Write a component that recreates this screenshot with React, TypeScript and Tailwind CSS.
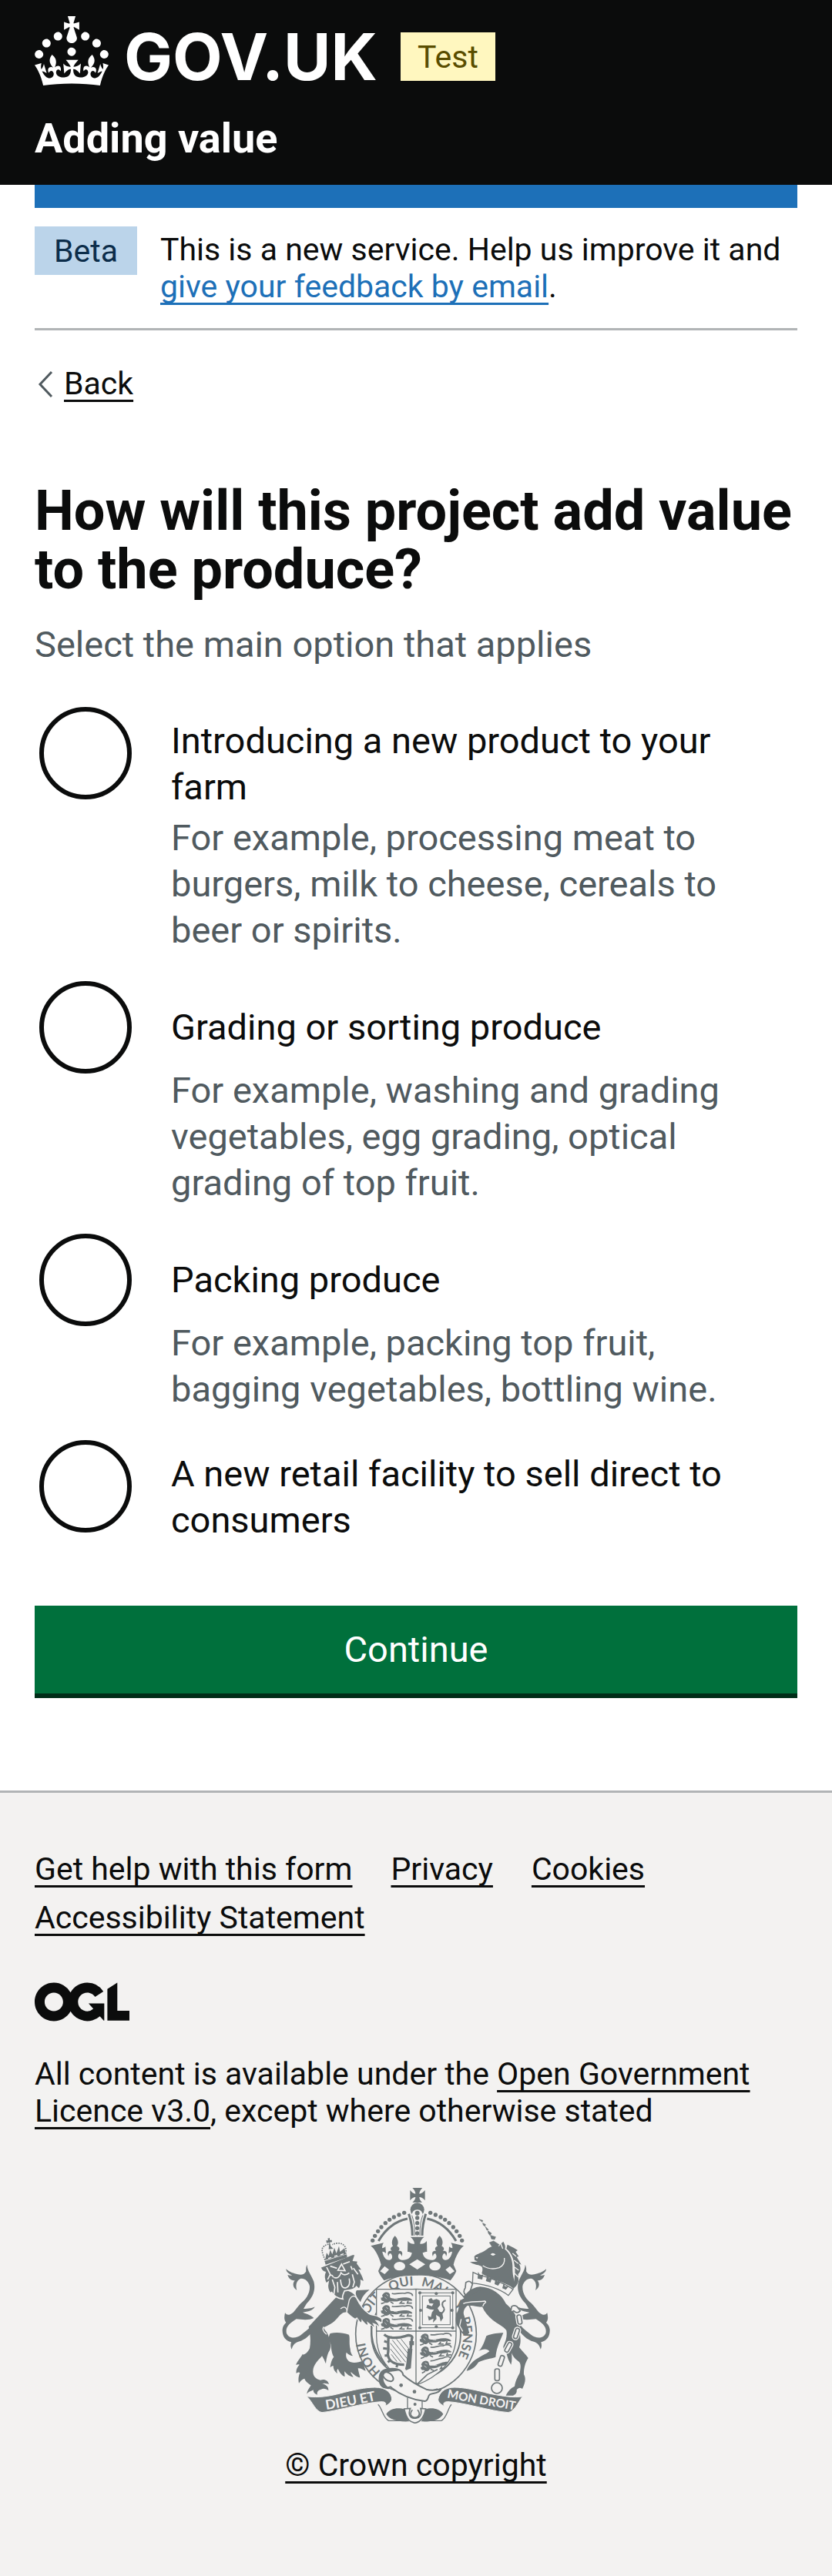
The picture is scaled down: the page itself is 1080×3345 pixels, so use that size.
import React, { useState } from 'react';

const options = [
  {
    id: 'new-product',
    label: 'Introducing a new product to your farm',
    hint: 'For example, processing meat to burgers, milk to cheese, cereals to beer or spirits.',
  },
  {
    id: 'grading',
    label: 'Grading or sorting produce',
    hint: 'For example, washing and grading vegetables, egg grading, optical grading of top fruit.',
  },
  {
    id: 'packing',
    label: 'Packing produce',
    hint: 'For example, packing top fruit, bagging vegetables, bottling wine.',
  },
  { id: 'retail', label: 'A new retail facility to sell direct to consumers', hint: '' },
];

const footerLinks = ['Get help with this form', 'Privacy', 'Cookies', 'Accessibility Statement'];

const linkClass = 'underline decoration-[3px] underline-offset-[7px] [text-decoration-skip-ink:none]';

function Crown() {
  return (
    <svg viewBox="0 0 32 30" className="h-[90px] w-24 shrink-0" fill="currentColor" aria-hidden="true">
      <path d="M22.6 10.4c-1 .4-2-.1-2.4-1-.4-.9.1-2 1-2.4.9-.4 2 .1 2.4 1s-.1 2-1 2.4m-5.9 6.7c-.9.4-2-.1-2.4-1-.4-.9.1-2 1-2.4.9-.4 2 .1 2.4 1s-.1 2-1 2.4m10.8-3.7c-1 .4-2-.1-2.4-1-.4-.9.1-2 1-2.4.9-.4 2 .1 2.4 1s0 2-1 2.4m3.3 4.8c-1 .4-2-.1-2.4-1-.4-.9.1-2 1-2.4.9-.4 2 .1 2.4 1s-.1 2-1 2.4M17 4.7l2.3 1.2V2.5l-2.3.7-.2-.2.9-3h-3.4l.9 3-.2.2c-.1.1-2.3-.7-2.3-.7v3.4L15 4.7c.1.1.1.2.2.2l-1.3 4c-.1.2-.1.4-.1.6 0 1.1.8 2 1.9 2.2h.7c1-.2 1.9-1.1 1.9-2.1 0-.2 0-.4-.1-.6l-1.3-4c-.1-.2 0-.2.1-.3m-7.6 5.7c.9.4 2-.1 2.4-1 .4-.9-.1-2-1-2.4-.9-.4-2 .1-2.4 1s0 2 1 2.4m-5 3c.9.4 2-.1 2.4-1 .4-.9-.1-2-1-2.4-.9-.4-2 .1-2.4 1s.1 2 1 2.4m-3.2 4.8c.9.4 2-.1 2.4-1 .4-.9-.1-2-1-2.4-.9-.4-2 .1-2.4 1s0 2 1 2.4m14.8 11c4.4 0 8.6.3 12.3.8 1.1-4.5 2.4-7 3.7-8.8l-2.5-.9c.2 1.3.3 1.9 0 2.7-.4-.4-.8-1.1-1.1-2.3l-1.2 4c.7-.5 1.3-.8 2-.9-1.1 2.5-2.6 3.1-3.5 3-1.1-.2-1.7-1.2-1.5-2.1.3-1.2 1.5-1.5 2.1-.1 1.1-2.3-.8-3-2-2.3 1.9-1.9 2.1-3.5.6-5.6-2.1 1.6-2.1 3.2-1.2 5.5-1.2-1.4-3.2-.6-2.5 1.6.9-1.4 2.1-.5 1.9.8-.2 1.1-1.7 2.1-3.5 1.9-2.7-.2-2.9-2.1-2.9-3.6.7-.1 1.9.5 2.9 1.9l.4-4.3c-1.1 1.1-2.1 1.4-3.2 1.4.4-1.2 2.1-3 2.1-3h-5.4s1.7 1.9 2.1 3c-1.1 0-2.1-.2-3.2-1.4l.4 4.3c1-1.4 2.2-2 2.9-1.9-.1 1.5-.2 3.4-2.9 3.6-1.9.2-3.4-.8-3.5-1.9-.2-1.3 1-2.2 1.9-.8.7-2.3-1.2-3-2.5-1.6.9-2.2.9-3.9-1.2-5.5-1.5 2-1.3 3.7.6 5.6-1.2-.7-3.1 0-2 2.3.6-1.4 1.8-1.1 2.1.1.2.9-.3 1.9-1.5 2.1-.9.2-2.4-.5-3.5-3 .6 0 1.2.3 2 .9l-1.2-4c-.3 1.1-.7 1.9-1.1 2.3-.3-.8-.2-1.4 0-2.7l-2.9.9C1.3 23 2.6 25.5 3.7 30c3.7-.5 7.9-.8 12.3-.8" />
    </svg>
  );
}

function LicenceLogo() {
  return (
    <svg viewBox="0 0 483.2 195.7" className="h-[51px] w-[123px]" fill="currentColor" role="img" aria-label="Open Government Licence">
      <path d="M421.5 142.8V.1l-50.7 32.3v161.1h112.4v-50.7zm-122.3-9.6A47.12 47.12 0 0 1 221 97.8c0-26 21.1-47.1 47.1-47.1 16.7 0 31.4 8.7 39.7 21.8l42.7-27.2A97.63 97.63 0 0 0 268.1 0c-36.5 0-68.3 20.1-85.1 49.7A98 98 0 0 0 97.8 0C43.9 0 0 43.9 0 97.8s43.9 97.8 97.8 97.8c36.5 0 68.3-20.1 85.1-49.7a97.76 97.76 0 0 0 149.6 25.4l19.4 22.2h3v-87.8h-80l24.3 27.5zM97.8 145c-26 0-47.1-21.1-47.1-47.1s21.1-47.1 47.1-47.1 47.1 21.1 47.1 47.1S123.8 145 97.8 145" />
    </svg>
  );
}

const INK = '#6f7779';
const PAPER = '#f3f2f1';

const beads: [number, number][] = [
  [560, 160], [540, 168], [520, 177], [503, 187], [487, 200], [471, 216], [458, 232], [446, 250], [437, 268],
];

function CrownHalf() {
  return (
    <g>
      {beads.map(([x, y]) => (
        <circle key={x} cx={x} cy={y} r="8" />
      ))}
      <path d="M460 270C490 218 530 192 573 183" fill="none" stroke={INK} strokeWidth="9" />
      <path d="M578 164C588 195 592 220 592 249" fill="none" stroke={INK} strokeWidth="9" />
      <path d="M590 170C599 195 601 220 601 249" fill="none" stroke={INK} strokeWidth="3" />
      <path d="M430 289L480 277C476 282 474 290 474 298C480 297 484 295 487 291L489 318C484 313 480 311 475 311C478 330 488 345 503 344C515 342 517 328 507 318C500 318 499 328 499 330C492 318 497 305 512 309C502 300 510 292 516 290C508 275 514 260 524 250C534 260 541 275 532 290C540 292 546 300 537 309C552 305 556 318 550 330C549 322 545 318 540 319C533 330 536 342 550 344C572 346 588 335 590 316C582 313 578 312 573 312L574 270C580 278 588 282 600 281C600 270 592 260 584 254H612V404C565 404 520 408 482 424C470 410 462 395 459 387L470 362C462 330 445 300 430 289Z" />
      <ellipse cx="542" cy="368" rx="22" ry="17" fill={PAPER} />
      <path d="M484 368L501 382L484 399L466 388Z" fill={PAPER} />
    </g>
  );
}

function Tail() {
  return (
    <path d="M158 512C176 500 194 474 192 446C188 426 168 412 154 418C138 428 137 445 142 462C126 452 124 436 134 424C118 424 110 415 106 402C112 405 120 404 124 404C108 398 100 388 100 379C114 392 130 396 146 400C160 404 172 400 178 388C176 375 180 365 182 362C181 384 200 405 208 428C216 460 205 488 180 514L168 534C190 534 202 532 212 526C206 540 185 546 165 548C185 556 200 560 208 570C190 580 160 576 140 574C115 590 96 605 102 630C112 652 140 650 158 636C172 624 190 612 198 600L214 606C198 632 176 656 148 662C130 668 125 680 122 692C116 682 118 672 120 664C98 660 84 640 86 614C88 600 94 594 100 588C90 575 94 562 96 550C105 562 115 558 128 548C138 536 148 522 158 512Z" />
  );
}

function ShieldLion() {
  return (
    <g>
      <path d="M12 4C22 -4 34 0 36 8C38 14 34 18 40 22C60 28 80 18 96 20C108 20 122 24 124 32C118 34 110 30 104 32C96 36 80 30 70 34C56 38 44 32 34 36C26 44 14 42 12 34C4 34 0 28 2 20C8 22 10 18 6 12C8 8 10 6 12 4Z" />
      <path d="M44 4C58 10 76 0 94 4C110 -2 126 4 124 14M16 40L2 44M38 36L50 44M84 34L76 42L94 43M108 32L104 42L122 42" fill="none" stroke={INK} strokeWidth="5" />
      <path d="M22 8L30 14M16 18L24 26M52 24L66 26" stroke={PAPER} strokeWidth="2" />
    </g>
  );
}

function RoyalArms() {
  return (
    <svg viewBox="84 63 1044 918" className="h-[306px] w-[348px]" fill={INK} role="img" aria-label="Royal coat of arms">
      <defs>
        <path id="garter-arc" d="M480.500 787.500A192 192 0 1 1 650 820" />
        <path id="motto-left" d="M257 927Q365 910 475 885" />
        <path id="motto-right" d="M726 880Q850 905 1000 930" />
        <clipPath id="shield-clip">
          <path d="M452 458H762V640C762 740 690 800 606 832C522 800 452 740 452 640Z" />
        </clipPath>
      </defs>

      {/* tails of both supporters */}
      <Tail />
      <g transform="translate(1213 0) scale(-1 1)">
        <Tail />
      </g>

      {/* lion body and legs */}
      <path d="M296 488C260 525 220 570 188 604C196 640 196 665 192 688C182 712 160 718 166 708C160 720 146 735 138 752C144 752 148 750 152 752C142 762 138 775 140 785C147 782 150 780 154 784C148 796 147 812 150 824C160 810 166 808 172 806C176 820 190 826 197 832C192 842 182 852 181 866C188 856 200 854 206 850C206 862 214 866 222 869C218 858 226 850 236 848C248 842 258 848 265 852C266 838 254 828 240 826C250 822 260 826 267 828C264 812 248 806 234 812C214 808 204 795 205 776C206 752 225 735 240 718C246 726 250 736 255 748C258 722 262 708 270 695C278 680 270 650 262 632C256 620 246 614 247 606C262 600 284 590 300 570C312 556 322 545 336 548C352 562 358 568 370 572C376 566 384 580 392 588C402 580 408 590 418 598C426 590 436 600 444 606C452 596 456 594 466 606L470 590C478 582 474 570 462 566C450 556 434 566 424 556C404 540 388 520 372 490C366 474 352 466 330 462Z" />
      <path d="M272 630C298 624 322 628 345 635C350 650 344 664 350 690C350 704 356 712 360 718C350 716 342 712 335 704C330 722 338 736 352 742C370 748 385 740 398 738L410 776C400 772 390 764 380 766C382 780 386 790 388 802C374 800 362 788 352 780C352 788 358 792 362 800C346 798 336 788 328 778C326 786 330 792 328 798C314 792 308 780 302 768C296 774 298 780 300 786C288 778 284 768 284 756C278 756 276 760 272 762C274 746 278 730 286 722C278 710 276 690 274 672C268 660 262 645 272 630Z" />
      <path d="M246 604Q238 618 258 634M312 534Q330 520 336 536L340 560" fill="none" stroke={PAPER} strokeWidth="4" />
      <path d="M375 462L425 460C405 475 395 490 390 508C375 490 366 474 375 462Z" />

      {/* lion head, mane and small crown */}
      <path d="M234 372L256 364L360 322L370 322L362 346L380 348L378 358L398 385L386 384C394 400 404 412 404 430L392 424C394 440 388 452 384 458L374 448C368 460 345 462 328 464C320 480 318 490 321 496C300 494 284 482 278 470L272 474C262 462 260 446 264 430L256 436C248 420 246 405 252 392C242 390 236 382 234 372Z" stroke={PAPER} strokeWidth="5" />
      <path d="M258 372L272 400L262 420M272 368L298 376M322 360L348 350M302 384L316 360L330 386ZM286 412C300 418 310 408 314 394C322 404 334 404 346 394M312 420C314 445 320 456 334 452C346 448 350 436 346 416M280 420L290 450L286 480M300 430L302 470M358 400L366 430L360 450M362 376L380 400M272 404Q280 400 284 412M352 368L358 382" fill="none" stroke={PAPER} strokeWidth="5" />
      <path d="M250 348L336 322L338 334L254 362Z" />
      <path d="M252 344C240 315 236 302 246 292C255 283 264 282 270 284M332 320C336 304 332 290 322 284C312 276 292 278 280 284" fill="none" stroke={INK} strokeWidth="5" strokeDasharray="5 4" />
      <path d="M252 344L258 316L266 328L272 304L280 322L288 296L296 318L306 290L310 312L328 298L332 322ZM262 260L270 258L270 266L278 266L279 274L270 275L274 290L284 300L266 302L268 276L258 278L256 268L264 268Z" />
      <path d="M264 338L276 334M288 330L300 327M312 324L324 320" stroke={PAPER} strokeWidth="4" />

      {/* unicorn body and legs */}
      <path d="M880 640C905 630 928 628 946 628C936 655 920 680 916 722C900 728 868 732 850 742C842 752 832 770 803 776C808 762 815 752 830 738C850 722 880 710 892 700C884 688 865 690 848 700C864 688 872 664 880 640Z" />
      <path d="M776 512C790 480 815 452 856 448C900 450 940 478 956 514C980 535 1000 560 1008 600C1010 640 1018 660 1008 684C1020 700 1034 712 1043 726C1030 745 1025 770 1026 790C1036 806 1030 826 1020 846C1012 840 1004 842 998 850C1000 862 992 870 984 872H956C962 858 975 842 990 836C994 812 1002 800 1010 784C1014 762 1016 745 1004 738C988 728 982 715 978 706C980 722 980 738 976 752C968 740 962 724 958 706C950 700 946 690 946 680C956 660 962 640 958 618C945 600 925 594 905 578C885 562 872 545 864 526C845 528 820 518 805 522C790 535 786 548 792 560C798 580 812 600 816 632C800 642 784 628 772 606C758 590 760 560 768 545C774 532 772 524 776 512Z" />

      {/* unicorn head, horn, collar and mane */}
      <path d="M833 330C845 318 862 318 880 304C895 290 915 286 930 290C938 278 942 276 946 272C952 284 956 292 952 302C972 316 984 345 982 380C982 410 992 430 994 446L986 456C960 430 900 424 862 396C865 385 868 376 860 368C845 362 830 362 816 352L846 350L834 344Z" />
      <path d="M958 300L962 284L974 290L986 296L1002 306L994 312L1006 330L998 332L1016 362L1006 358C1018 375 1012 395 1004 398L1004 412C1008 430 1000 440 994 448C982 425 996 400 990 370C988 340 976 315 958 300Z" />
      <path d="M896 322Q904 312 916 322Q906 332 896 322ZM838 334L848 332L844 340Z" fill={PAPER} />
      <path d="M866 366Q895 385 930 374Q954 362 950 336M936 280L944 300M982 318L996 330M988 345L1004 358M990 372L1006 384M990 396L1004 410" fill="none" stroke={PAPER} strokeWidth="4" />
      <path d="M852 186L866 190L864 196ZM866 200L877 206L874 212L868 208ZM876 214L888 226L882 228ZM886 230L900 240L894 248L888 240ZM896 248L916 254L912 264L900 262ZM892 276L908 270L930 284L916 298L902 292Z" stroke={INK} strokeWidth="2" />
      <path d="M828 392L846 400C880 410 930 422 984 458L966 482C930 455 880 440 826 434Z" fill={PAPER} stroke={INK} strokeWidth="4" />
      <path d="M848 390L856 404L868 400L864 420L846 416ZM884 402L890 416L902 414L896 432L878 426ZM916 414L922 428L936 428L926 444L912 438ZM948 432L952 446L966 448L956 460L942 454Z" />

      {/* chain */}
      <g fill="none" stroke={PAPER} strokeWidth="13">
        <rect x="1001" y="558" width="16" height="36" rx="7" transform="rotate(-10 1009 576)" />
        <rect x="990" y="610" width="15" height="40" rx="7" transform="rotate(18 997 630)" />
        <rect x="958" y="664" width="15" height="40" rx="7" transform="rotate(28 965 684)" />
      </g>
      <g fill={PAPER} stroke={INK} strokeWidth="5">
        <path d="M975 548L978 526Q985 518 998 524L1012 542Q1000 556 986 542Z" />
        <rect x="1001" y="558" width="16" height="36" rx="7" transform="rotate(-10 1009 576)" />
        <rect x="990" y="610" width="15" height="40" rx="7" transform="rotate(18 997 630)" />
        <rect x="958" y="664" width="15" height="40" rx="7" transform="rotate(28 965 684)" />
        <rect x="930" y="716" width="16" height="42" rx="7" transform="rotate(18 938 737)" />
        <rect x="913" y="768" width="18" height="46" rx="7" />
        <circle cx="921" cy="843" r="21" />
      </g>

      {/* garter */}
      <circle cx="606" cy="632" r="235" fill={PAPER} stroke={INK} strokeWidth="5" />
      <circle cx="606" cy="632" r="174" fill="none" stroke={INK} strokeWidth="6" />
      <g fontFamily="Lato, sans-serif" fontWeight="700" fontSize="50">
        <text><textPath href="#garter-arc" startOffset="14">HONI</textPath></text>
        <text><textPath href="#garter-arc" startOffset="226">SOIT</textPath></text>
        <text><textPath href="#garter-arc" startOffset="383">QUI</textPath></text>
        <text><textPath href="#garter-arc" startOffset="505">MAL</textPath></text>
        <text><textPath href="#garter-arc" startOffset="652">Y</textPath></text>
        <text><textPath href="#garter-arc" startOffset="712">PENSE</textPath></text>
      </g>

      {/* shield */}
      <path d="M452 458H762V640C762 740 690 800 606 832C522 800 452 740 452 640Z" fill={PAPER} stroke={INK} strokeWidth="4" />
      <g clipPath="url(#shield-clip)">
        <path d="M606 458V832M452 621H762" stroke={INK} strokeWidth="4" />
        <g transform="translate(468 470)"><ShieldLion /></g>
        <g transform="translate(468 520)"><ShieldLion /></g>
        <g transform="translate(468 570)"><ShieldLion /></g>
        <g transform="translate(618 632) rotate(-2)"><ShieldLion /></g>
        <g transform="translate(618 684) rotate(-6)"><ShieldLion /></g>
        <g transform="translate(618 742) rotate(-12)"><ShieldLion /></g>
        <g fill="none" stroke={INK} strokeWidth="3">
          <rect x="621" y="472" width="128" height="136" />
          <rect x="631" y="484" width="108" height="112" />
        </g>
        <circle cx="621" cy="472" r="6" />
        <circle cx="749" cy="472" r="6" />
        <circle cx="621" cy="608" r="6" />
        <circle cx="749" cy="608" r="6" />
        <circle cx="685" cy="475" r="6" />
        <circle cx="685" cy="604" r="6" />
        <circle cx="624" cy="540" r="6" />
        <circle cx="746" cy="540" r="6" />
        <path d="M654 498L666 492L672 500L686 496L698 502L700 520L690 532L698 545L708 548L712 570L702 584L698 566L684 558L686 574L672 588L674 572L656 580L652 562L664 566L668 548L676 538L660 536L646 530L650 518L668 524L674 514L658 512Z" />
        <path d="M722 502Q704 506 710 524Q724 536 706 552" fill="none" stroke={INK} strokeWidth="6" />
        <path d="M482 634C500 652 540 648 566 640C580 634 596 640 590 650L584 700C580 730 574 752 568 770M500 640C494 670 502 690 496 712C500 740 520 752 560 752" fill="none" stroke={INK} strokeWidth="10" />
        <path d="M482 660L494 664M478 688L494 690M484 716L498 716M496 742L508 734M530 762L534 750" stroke={INK} strokeWidth="9" />
        <path d="M580 660H598V676H580ZM574 690L592 690L586 766L566 774Z" />
        <path d="M514 656L576 734M530 652L578 712M548 652L578 690M506 668L566 742M506 690L548 742M510 712L532 740" stroke={INK} strokeWidth="3" />
      </g>

      {/* foreleg and paw of the lion, and the unicorn's raised leg, over the garter */}
      <path d="M346 500C356 480 368 482 374 492C386 518 402 540 424 554C436 562 450 556 462 566C474 570 478 580 470 590C466 584 458 580 450 580C458 588 466 596 464 608C456 598 448 594 440 592C444 598 446 602 444 608C434 602 426 594 418 588C420 594 420 596 418 600C408 594 402 588 396 580C396 586 394 588 392 590C384 582 380 578 376 570C372 572 370 574 368 574C354 566 344 556 336 548Z" stroke={PAPER} strokeWidth="4" />
      <path d="M784 498C770 514 776 532 766 548C758 570 758 590 772 608C778 622 788 634 800 640L814 628C806 606 800 582 794 562C788 548 792 534 806 522C826 518 846 526 866 526L900 500L860 460Z" />
      <path d="M790 514C810 504 850 508 874 504C880 506 878 512 872 512L866 524M782 574L776 600L788 622" fill="none" stroke={PAPER} strokeWidth="4" />
      <path d="M800 432Q816 420 826 438L818 462L800 480Q786 470 798 452Z" fill={PAPER} stroke={INK} strokeWidth="5" />
      <path d="M432 600L434 640Q440 700 490 756" fill="none" stroke={INK} strokeWidth="6" />

      {/* belt and buckle */}
      <path d="M606 832L650 790L690 770M606 822L640 862L690 846" fill="none" stroke={INK} strokeWidth="5" />
      <path d="M490 770C520 764 552 768 556 792C590 822 620 836 646 848C670 854 690 850 704 846C694 866 670 862 660 868C650 876 656 892 640 894C590 888 540 866 506 838C470 850 458 822 466 790C470 778 478 772 490 770Z" fill={PAPER} stroke={INK} strokeWidth="6" />
      <path d="M466 790C474 768 520 762 548 772C530 780 500 776 484 786C476 800 474 824 506 846C480 850 454 826 466 790Z" />
      <ellipse cx="497" cy="798" rx="24" ry="14" transform="rotate(38 497 798)" fill="none" stroke={INK} strokeWidth="6" />
      <circle cx="548" cy="832" r="7" />
      <circle cx="600" cy="857" r="7" />

      {/* motto ribbon */}
      <path d="M181 875C225 882 270 874 310 864C360 850 410 840 446 840C490 840 512 862 512 888C508 900 500 905 486 914C492 900 486 896 470 896C400 900 300 932 240 938C215 934 205 900 181 875Z" stroke={PAPER} strokeWidth="3" />
      <path d="M1021 875C990 882 940 874 890 864C840 850 790 840 756 840C715 840 696 862 692 888C694 900 702 905 716 914C710 900 716 896 732 896C800 900 890 932 965 938C988 934 1000 905 1021 875Z" stroke={PAPER} strokeWidth="3" />
      <g fill={PAPER} fontFamily="Lato, sans-serif" fontWeight="700">
        <text fontSize="52"><textPath href="#motto-left">DIEU ET</textPath></text>
        <text fontSize="46"><textPath href="#motto-right">MON DROIT</textPath></text>
      </g>
      <path d="M458 907C474 920 478 962 500 970H575M744 907C730 920 726 962 704 970H630" fill="none" stroke={INK} strokeWidth="4" />
      <path d="M490 944C505 920 540 918 562 926C566 948 572 962 580 973C545 975 505 970 490 944ZM712 944C697 920 662 918 642 926C638 948 632 962 626 973C660 975 697 970 712 944Z" />
      <path d="M573 880V922M630 892V922" stroke={INK} strokeWidth="4" />
      <circle cx="602" cy="906" r="6" />
      <path d="M560 924C570 970 586 976 602 979C620 976 636 962 644 924L624 922C632 950 616 962 602 960C588 962 572 950 584 922Z" fill={PAPER} stroke={INK} strokeWidth="5" />
      <path d="M592 928C578 945 588 958 602 958C616 958 626 945 612 928" fill="none" stroke={INK} strokeWidth="5" />

      {/* royal crown */}
      <path d="M592 63H631C624 70 619 78 619 86C627 85 635 80 641 72V112C635 104 627 99 619 99C619 107 624 114 630 120H592C598 114 604 107 604 99C596 99 589 104 583 112V72C589 80 596 85 604 86C604 78 599 70 592 63Z" />
      <circle cx="611" cy="148" r="27" />
      <path d="M588 176Q590 148 611 148Q632 148 634 176Z" fill={PAPER} />
      <CrownHalf />
      <g transform="translate(1222 0) scale(-1 1)">
        <CrownHalf />
      </g>
      <path d="M611 341L642 361L611 381L580 361Z" fill={PAPER} />
      <circle cx="611" cy="161" r="9" />
      <circle cx="611" cy="180" r="8" />
      <circle cx="611" cy="200" r="8" />
      <circle cx="611" cy="220" r="8" />
      <circle cx="611" cy="240" r="8" />
    </svg>
  );
}

export default function App() {
  const [selected, setSelected] = useState('');

  return (
    <div className="min-h-screen bg-[#f3f2f1] font-[Roboto,sans-serif] text-[41px] leading-[48px] text-[#0b0c0c]">
      <header className="bg-[#0b0c0c] px-[45px] pt-[21px] pb-[30px] text-white">
        <div className="flex h-[90px] items-start">
          <a href="#home" className="flex" aria-label="GOV.UK">
            <Crown />
            <span className="ml-5 pt-2 font-[Inter,sans-serif] text-[84px] leading-[90px] font-bold">GOV.UK</span>
          </a>
          <strong className="mt-[21px] ml-[30px] flex h-[63px] items-center bg-[#fff7bf] px-[22px] font-normal text-[#594d00]">
            Test
          </strong>
        </div>
        <a href="#service" className="mt-[39px] block text-[54px] leading-[60px] font-bold">
          Adding value
        </a>
      </header>

      <div className="bg-white px-[45px]">
        <div className="h-[30px] bg-[#1d70b8]" />
        <div className="flex items-start gap-[30px] border-b-[3px] border-[#b1b4b6] pt-6 pb-[30px]">
          <strong className="flex h-[63px] items-center bg-[#bbd4ea] px-[25px] font-normal text-[#0c2d4a]">Beta</strong>
          <p className="pt-[6px]">
            This is a new service. Help us improve it and{' '}
            <a href="#feedback" className={`${linkClass} text-[#1d70b8]`}>
              give your feedback by email
            </a>
            .
          </p>
        </div>

        <a href="#back" className="mt-[45px] flex w-fit items-center">
          <svg viewBox="0 0 38 48" className="h-12 w-[38px]" fill="none" stroke="#505a5f" strokeWidth="3" aria-hidden="true">
            <path d="M22 9L7 25L22 41" />
          </svg>
          <span className={linkClass}>Back</span>
        </a>

        <main className="pt-[104px] pb-[120px]">
          <form onSubmit={(e) => e.preventDefault()}>
            <fieldset>
              <legend>
                <h1 className="text-[72px] leading-[76px] font-bold">How will this project add value to the produce?</h1>
              </legend>
              <p className="mt-[29px] text-[47px] leading-[60px] text-[#505a5f]">Select the main option that applies</p>
              <div className="mt-[51px] flex flex-col gap-9 text-[47px] leading-[60px]">
                {options.map((o) => (
                  <div key={o.id} className="flex items-start gap-[51px] pl-[6px]">
                    <input
                      type="radio"
                      id={o.id}
                      name="addingValue"
                      value={o.id}
                      checked={selected === o.id}
                      onChange={() => setSelected(o.id)}
                      aria-describedby={o.hint ? `${o.id}-hint` : undefined}
                      className="size-[120px] shrink-0 appearance-none rounded-full border-[6px] border-[#0b0c0c] bg-white checked:bg-[#0b0c0c] checked:bg-clip-content checked:p-6"
                    />
                    <div className="pr-[45px]">
                      <label htmlFor={o.id} className="flex min-h-[106px] items-center pt-[14px]">
                        {o.label}
                      </label>
                      {o.hint && (
                        <p id={`${o.id}-hint`} className="mt-[6px] text-[#505a5f]">
                          {o.hint}
                        </p>
                      )}
                    </div>
                  </div>
                ))}
              </div>
            </fieldset>
            <button
              type="submit"
              className="mt-[81px] block h-[120px] w-full border-b-[6px] border-[#002d18] bg-[#00703c] text-[47px] leading-[60px] text-white"
            >
              Continue
            </button>
          </form>
        </main>
      </div>

      <footer className="border-t-[3px] border-[#b1b4b6] bg-[#f3f2f1] px-[45px] pt-[75px] pb-[120px]">
        <ul className="flex flex-wrap gap-x-[50px] gap-y-[15px]">
          {footerLinks.map((l) => (
            <li key={l}>
              <a href="#footer" className={linkClass}>
                {l}
              </a>
            </li>
          ))}
        </ul>
        <div className="mt-[60px]">
          <LicenceLogo />
        </div>
        <p className="mt-[44px]">
          All content is available under the{' '}
          <a href="#licence" className={linkClass}>
            Open Government Licence v3.0
          </a>
          , except where otherwise stated
        </p>
        <a href="#copyright" className="mx-auto mt-[76px] flex w-fit flex-col items-center gap-[30px]">
          <RoyalArms />
          <span className={linkClass}>© Crown copyright</span>
        </a>
      </footer>
    </div>
  );
}
